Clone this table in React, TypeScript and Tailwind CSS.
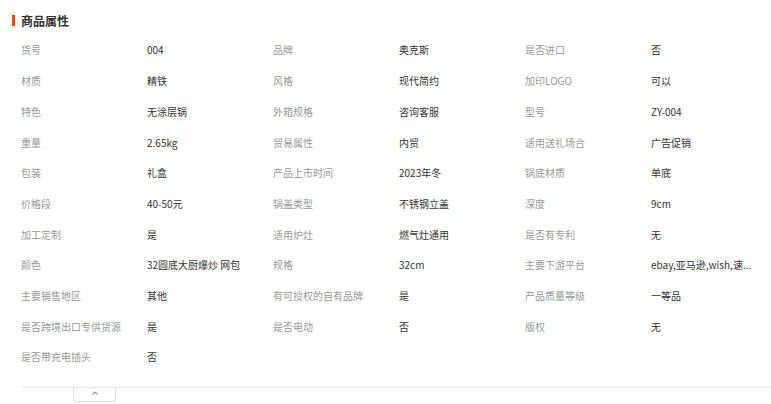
import React from "react";

const rows: [string, string, string, string, string, string][] = [
  ["货号", "004", "品牌", "奥克斯", "是否进口", "否"],
  ["材质", "精铁", "风格", "现代简约", "加印LOGO", "可以"],
  ["特色", "无涂层锅", "外箱规格", "咨询客服", "型号", "ZY-004"],
  ["重量", "2.65kg", "贸易属性", "内贸", "适用送礼场合", "广告促销"],
  ["包装", "礼盒", "产品上市时间", "2023年冬", "锅底材质", "单底"],
  ["价格段", "40-50元", "锅盖类型", "不锈钢立盖", "深度", "9cm"],
  ["加工定制", "是", "适用炉灶", "燃气灶通用", "是否有专利", "无"],
  ["颜色", "32圆底大厨爆炒 网包", "规格", "32cm", "主要下游平台", "ebay,亚马逊,wish,速..."],
  ["主要销售地区", "其他", "有可授权的自有品牌", "是", "产品质量等级", "一等品"],
  ["是否跨境出口专供货源", "是", "是否电动", "否", "版权", "无"],
  ["是否带充电插头", "否", "", "", "", ""],
];

export default function App() {
  return (
    <div
      className="w-[771px] h-[404px] bg-white overflow-hidden"
      style={{ fontFamily: '"Noto Sans CJK SC", "Noto Sans", sans-serif' }}
    >
      <div className="pt-[12.5px] pl-[12px] flex items-center h-[29px]">
        <div className="w-[3px] h-[11px] bg-[#ff4400]" />
        <div className="ml-[6px] text-[12px] leading-[16px] font-bold text-[#333333]">商品属性</div>
      </div>
      <div className="mt-[5.6px] pl-[21px] grid grid-cols-[126px_126px_126px_126px_126px_126px]">
        {rows.map((r, i) =>
          r.map((t, j) => (
            <div
              key={i + "-" + j}
              className={
                "h-[30.7px] flex items-center text-[10px] whitespace-nowrap overflow-hidden " +
                (j % 2 === 0 ? "text-[#999999]" : "text-[#333333]")
              }
            >
              {t}
            </div>
          ))
        )}
      </div>
      <div className="mt-[14.5px] ml-[21px] border-t border-[#e3e3e3] relative">
        <div className="ml-[52px] w-[43px] h-[14px] border border-t-0 border-[#dddddd] rounded-b-[3px] flex items-start justify-center">
          <svg width="8" height="6" viewBox="0 0 8 6" className="mt-[2px]">
            <path d="M1.5 4.5 L4 2 L6.5 4.5" fill="none" stroke="#999" strokeWidth="1.2" />
          </svg>
        </div>
      </div>
    </div>
  );
}
